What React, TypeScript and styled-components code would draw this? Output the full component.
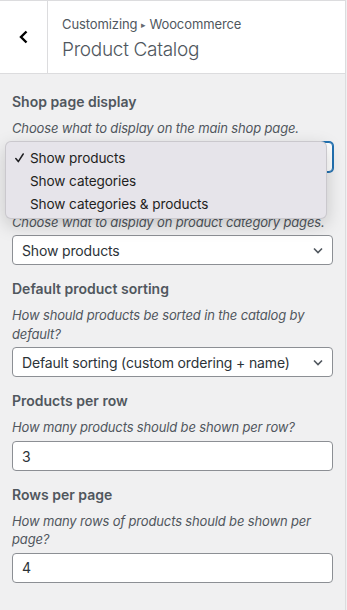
import React from "react";
import styled, { createGlobalStyle } from "styled-components";

const GlobalStyle = createGlobalStyle`
  html, body {
    margin: 0;
    padding: 0;
    background: #f0f0f1;
  }
  body {
    font-family: Inter, "Noto Sans", "Liberation Sans", sans-serif;
    -webkit-font-smoothing: antialiased;
  }
  * { box-sizing: border-box; }
`;

const Panel = styled.div`
  width: 346px;
  height: 610px;
  background: #f0f0f1;
  border-right: 1px solid #dcdcde;
  display: flex;
  flex-direction: column;
`;

const Header = styled.div`
  display: flex;
  height: 74px;
  background: #fff;
  border-top: 1px solid #dcdcde;
  border-bottom: 1px solid #dcdcde;
`;

const BackButton = styled.button`
  width: 48px;
  flex: none;
  border: 0;
  border-right: 1px solid #dcdcde;
  background: #fff;
  display: flex;
  align-items: center;
  justify-content: center;
  padding: 0;
  cursor: pointer;
`;

const Titles = styled.div`
  display: flex;
  flex-direction: column;
  padding: 13px 0 0 14px;
`;

const Crumb = styled.span`
  font-size: 13px;
  line-height: 20px;
  letter-spacing: -0.1px;
  color: #50575e;
`;

const Arrow = styled.span`
  font-size: 9px;
  vertical-align: 1px;
  color: #646970;
`;

const Title = styled.h1`
  margin: 2px 0 0;
  font-size: 19px;
  line-height: 26px;
  font-weight: 300;
  letter-spacing: -0.3px;
  color: #50575e;
`;

const Body = styled.div`
  padding: 18px 12px 0 12px;
  display: flex;
  flex-direction: column;
  gap: 14px;
`;

const Control = styled.div`
  display: flex;
  flex-direction: column;
`;

const Label = styled.label`
  font-size: 14px;
  line-height: 20px;
  font-weight: 600;
  color: #50575e;
  margin-bottom: 7px;
`;

const Description = styled.span`
  font-size: 13px;
  line-height: 18.2px;
  font-style: italic;
  letter-spacing: -0.15px;
  color: #50575e;
  margin-bottom: 4.5px;
`;

const SelectWrap = styled.div`
  position: relative;
  width: 100%;
`;

const SelectBox = styled.div<{ $focused?: boolean }>`
  height: 30px;
  display: flex;
  align-items: center;
  padding: 0 24px 0 9px;
  background: #fff;
  border: 1px solid ${(p) => (p.$focused ? "#2271b1" : "#8c8f94")};
  box-shadow: ${(p) => (p.$focused ? "0 0 0 1px #2271b1" : "none")};
  border-radius: 4px;
  font-size: 14px;
  letter-spacing: -0.15px;
  color: #2c3338;
  white-space: nowrap;
`;

const Chevron = styled.svg`
  position: absolute;
  right: 7px;
  top: 50%;
  transform: translateY(-50%);
`;

const TextInput = styled.input`
  height: 30px;
  width: 100%;
  padding: 0 9px;
  background: #fff;
  border: 1px solid #8c8f94;
  border-radius: 4px;
  font-family: inherit;
  font-size: 14px;
  color: #2c3338;
  outline: none;
`;

const Menu = styled.ul`
  position: absolute;
  top: -1px;
  left: -7px;
  width: 322px;
  height: 78px;
  margin: 0;
  padding: 5px 0;
  list-style: none;
  background: #e6e4ea;
  border: 1px solid rgba(0, 0, 0, 0.12);
  border-radius: 6px;
  box-shadow: 0 6px 18px rgba(0, 0, 0, 0.18);
  z-index: 2;
`;

const MenuItem = styled.li`
  display: flex;
  align-items: center;
  height: 23px;
  padding-left: 9px;
  font-size: 13.6px;
  letter-spacing: -0.1px;
  color: #1f1f22;
`;

const CheckSlot = styled.span`
  width: 15px;
  display: flex;
  align-items: center;
`;

const ChevronDown = () => (
  <Chevron width="16" height="16" viewBox="0 0 16 16">
    <path d="M4 6.5l4 4 4-4" fill="none" stroke="#50575e" strokeWidth="1.6" />
  </Chevron>
);

const CheckMark = () => (
  <svg width="9" height="10" viewBox="0 0 9 10">
    <path d="M0.8 5.6L3.3 8.6L8.2 1" fill="none" stroke="#1f1f22" strokeWidth="1.5" strokeLinecap="round" strokeLinejoin="round" />
  </svg>
);

type SelectProps = { value: string; focused?: boolean; options?: string[] };

const Select = ({ value, focused, options }: SelectProps) => (
  <SelectWrap>
    <SelectBox $focused={focused}>{value}</SelectBox>
    <ChevronDown />
    {options && (
      <Menu>
        {options.map((o) => (
          <MenuItem key={o}>
            <CheckSlot>{o === value && <CheckMark />}</CheckSlot>
            {o}
          </MenuItem>
        ))}
      </Menu>
    )}
  </SelectWrap>
);

export default function App() {
  return (
    <>
      <GlobalStyle />
      <Panel>
        <Header>
          <BackButton aria-label="Back">
            <svg width="12" height="16" viewBox="0 0 12 16">
              <path d="M8.5 2.5L3 8l5.5 5.5" fill="none" stroke="#000" strokeWidth="2.4" />
            </svg>
          </BackButton>
          <Titles>
            <Crumb>
              Customizing <Arrow>▸</Arrow> Woocommerce
            </Crumb>
            <Title>Product Catalog</Title>
          </Titles>
        </Header>
        <Body>
          <Control>
            <Label>Shop page display</Label>
            <Description>Choose what to display on the main shop page.</Description>
            <Select
              value="Show products"
              focused
              options={["Show products", "Show categories", "Show categories & products"]}
            />
          </Control>
          <Control>
            <Label>Category display</Label>
            <Description>Choose what to display on product category pages.</Description>
            <Select value="Show products" />
          </Control>
          <Control>
            <Label>Default product sorting</Label>
            <Description>How should products be sorted in the catalog by default?</Description>
            <Select value="Default sorting (custom ordering + name)" />
          </Control>
          <Control>
            <Label>Products per row</Label>
            <Description>How many products should be shown per row?</Description>
            <TextInput type="number" defaultValue="3" />
          </Control>
          <Control>
            <Label>Rows per page</Label>
            <Description>How many rows of products should be shown per page?</Description>
            <TextInput type="number" defaultValue="4" />
          </Control>
        </Body>
      </Panel>
    </>
  );
}
